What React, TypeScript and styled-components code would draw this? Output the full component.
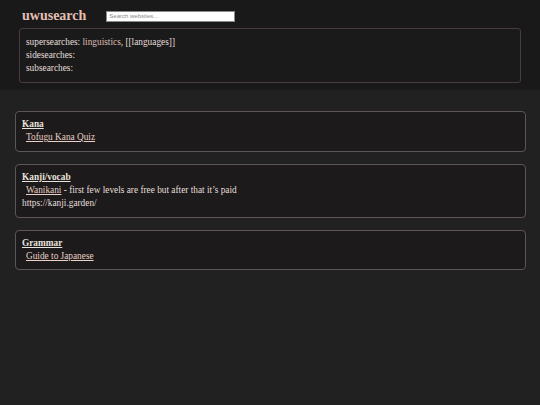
import { FC } from "react";
import styled, { createGlobalStyle } from "styled-components";

const GlobalStyle = createGlobalStyle`
  html, body {
    margin: 0;
    padding: 0;
    background: #212121;
  }
  body {
    font-family: "Liberation Serif", "Times New Roman", serif;
    font-size: 9.3px;
    line-height: 13.5px;
    color: #e4dfda;
  }
`;

type Entry = { name: string; note?: string };
type Section = { title: string; links: Entry[]; extra?: string[] };

const sections: Section[] = [
  { title: "Kana", links: [{ name: "Tofugu Kana Quiz" }] },
  {
    title: "Kanji/vocab",
    links: [
      {
        name: "Wanikani",
        note: " - first few levels are free but after that it\u2019s paid",
      },
    ],
    extra: ["https://kanji.garden/"],
  },
  { title: "Grammar", links: [{ name: "Guide to Japanese" }] },
];

const App: FC = () => {
  const renderSections = () =>
    sections.map((section) => (
      <Card key={section.title}>
        <CardTitle href="#">{section.title}</CardTitle>
        {section.links.map((link) => (
          <Line key={link.name} $indent>
            <Link href="#">{link.name}</Link>
            {link.note}
          </Line>
        ))}
        {section.extra?.map((text) => (
          <Line key={text}>{text}</Line>
        ))}
      </Card>
    ));

  return (
    <>
      <GlobalStyle />
      <Header>
        <TopRow>
          <Logo>uwusearch</Logo>
          <Search placeholder="Search websites..." />
        </TopRow>
        <InfoBox>
          <Line>
            supersearches: <Link href="#" $plain>linguistics</Link>, [[languages]]
          </Line>
          <Line>sidesearches:</Line>
          <Line>subsearches:</Line>
        </InfoBox>
      </Header>
      <Main>{renderSections()}</Main>
    </>
  );
};

export default App;

const Header = styled.header`
  background: #1a1919;
  padding: 6px 19px 8px 19px;
  border-bottom: 1px solid #1c1c1c;
  height: 75px;
`;

const TopRow = styled.div`
  display: flex;
  align-items: center;
  gap: 20px;
  padding-left: 3px;
  height: 20px;
`;

const Logo = styled.h1`
  margin: 0;
  font-size: 14px;
  font-weight: bold;
  color: #e2bfb3;
  line-height: 20px;
`;

const Search = styled.input`
  width: 129px;
  height: 11px;
  box-sizing: border-box;
  border: 1px solid #8a8a8a;
  background: #ffffff;
  padding: 0 2px;
  font-family: "Liberation Sans", Arial, sans-serif;
  font-size: 6px;
  outline: none;

  &::placeholder {
    color: #8a8a8a;
  }
`;

const InfoBox = styled.div`
  margin-top: 2px;
  width: 502px;
  box-sizing: border-box;
  height: 55px;
  border: 1px solid #4a3b40;
  border-radius: 3px;
  padding: 7px 6px;
  background: #1b1a1a;

  & > div {
    line-height: 13px;
  }
`;

const Main = styled.main`
  padding: 21px 15px;
  display: flex;
  flex-direction: column;
  gap: 12px;
`;

const Card = styled.section`
  width: 511px;
  box-sizing: border-box;
  border: 1px solid #5e5556;
  border-radius: 4px;
  background: #1c1a1a;
  padding: 5px 6px 6px 6px;
`;

const CardTitle = styled.a`
  display: block;
  font-weight: bold;
  color: #e8e2dc;
  text-decoration: underline;
  line-height: 14px;
`;

const Line = styled.div<{ $indent?: boolean }>`
  line-height: 13.5px;
  padding-left: ${(p) => (p.$indent ? "4px" : "0")};
  color: #e4dfda;
  white-space: nowrap;
`;

const Link = styled.a<{ $plain?: boolean }>`
  color: ${(p) => (p.$plain ? "#dcbcb2" : "#ead0c6")};
  text-decoration: ${(p) => (p.$plain ? "none" : "underline")};
`;
